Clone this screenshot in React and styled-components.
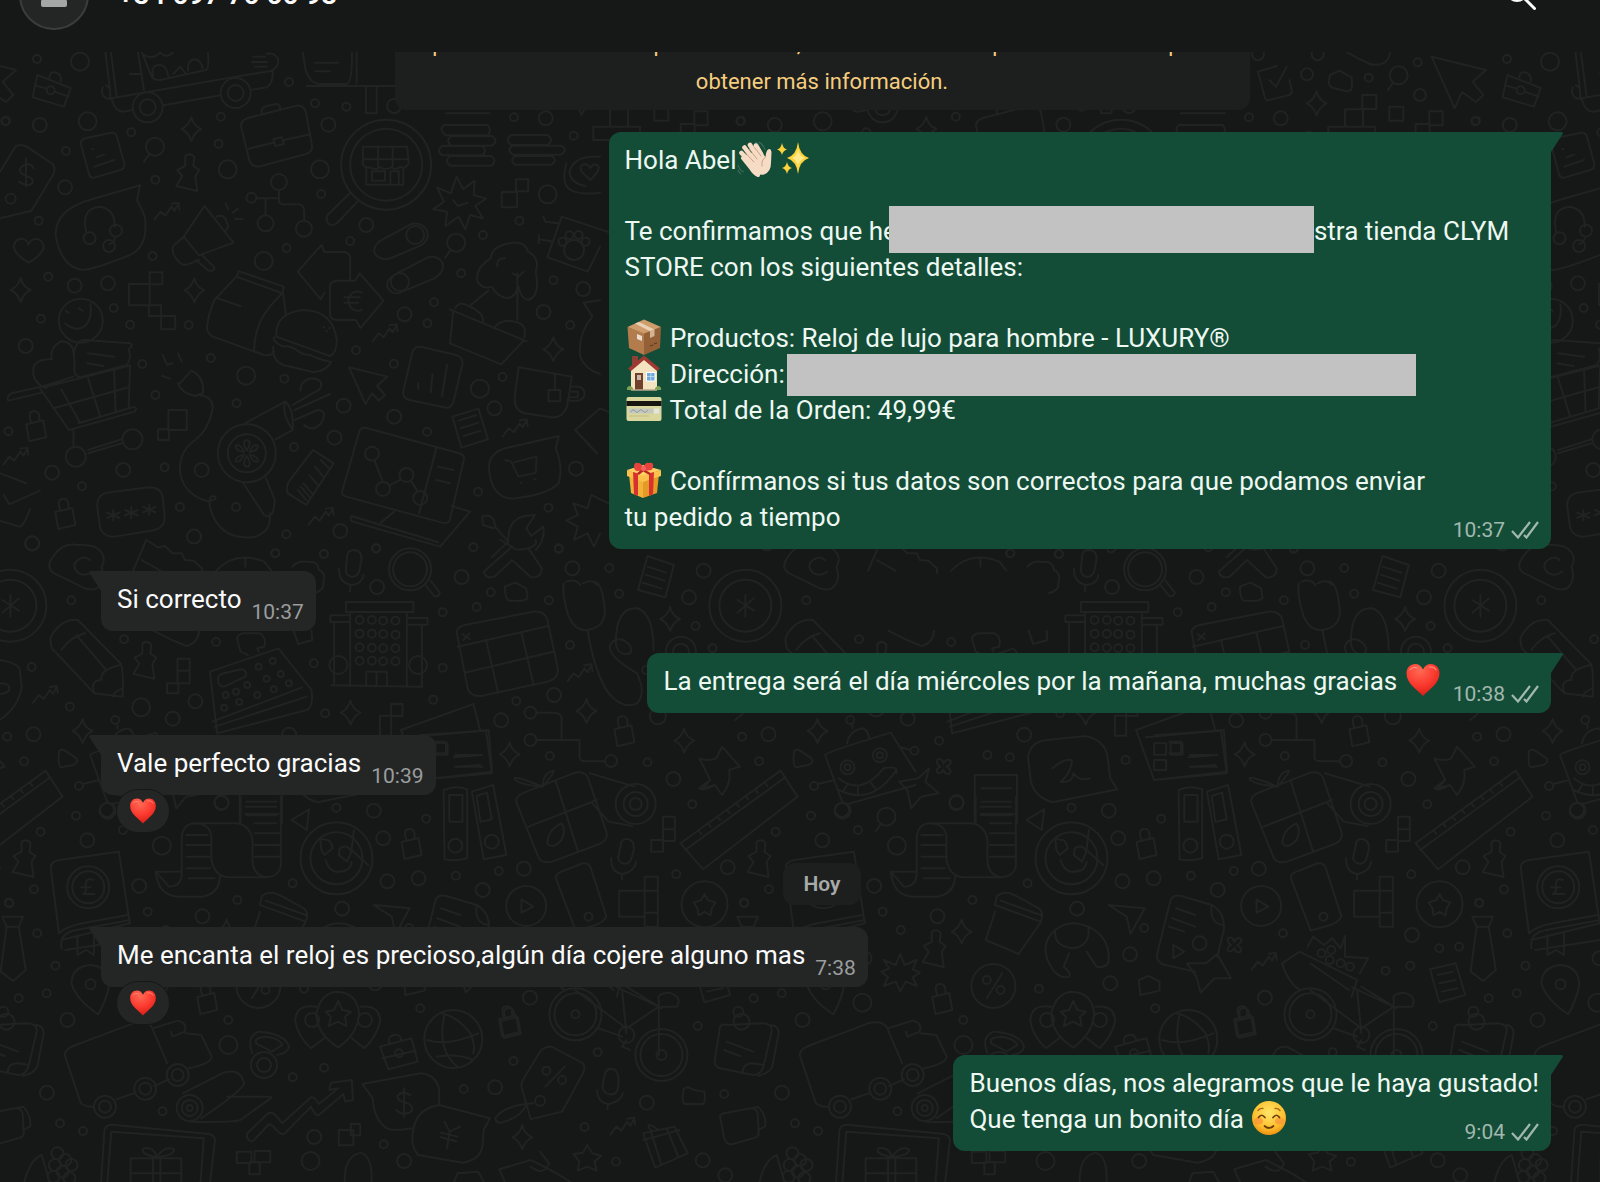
import React from 'react'
import styled, { createGlobalStyle } from 'styled-components'

const GlobalStyle = createGlobalStyle`
  * {
    box-sizing: border-box;
  }

  body {
    margin: 0;
    background: #161717;
    font-family: Roboto, "Liberation Sans", sans-serif;
    overflow: hidden;
  }

  p {
    margin: 0;
  }
`

/* ---------- wallpaper ---------- */

const TILE = 735

// small drawings used many times, centred on 0,0
const STAMPS = {
  sparkle: 'M0-12Q2-3 10 0Q3 3 0 12Q-3 3-10 0Q-3-3 0-12Z',
  lock: 'M-9-4L8-8L11 9L-6 13ZM-4-6Q-8-16-2-17Q5-18 4-8',
  pin: 'M-3-18Q2-22 6-17L5-8L11-4L7 2L9 17L-12 12L-6 2L-11-4L-3-8Z',
  zigzag: 'M-12 8L-6 0L-1 4L5-5L8-1L12-8M5-8L12-9L13-2',
  magnifier: 'M9-4A9 9 0 1 1-9-4A9 9 0 1 1 9-4M-6 4L-11 11',
  clover: 'M-6-7Q-1-9 0-3Q3-9 7-6Q8-2 3 0Q9 4 6 7Q1 8 0 3Q-3 8-6 6Q-8 2-3 0Q-8-3-6-7Z',
}

// every sheet has its own origin and scale; dots are [x, y, radius]
const SHEETS = [
  {
    x: 0, y: 100, sx: 0.3827, sy: 0.3333,
    dots: [
      [14, 64, 4], [343, 97, 4], [172, 153, 4], [406, 239, 4], [101, 362, 4], [399, 468, 4], [126, 530, 4], [297, 624, 4],
      [107, 656, 4], [340, 674, 4], [493, 675, 4], [372, 792, 4], [406, 885, 4], [22, 994, 4], [214, 1159, 4], [430, 1102, 4],
      [470, 1221, 4], [577, 50, 4], [571, 131, 4], [839, 282, 4], [749, 444, 4], [915, 423, 4], [1262, 405, 4], [1357, 362, 4],
      [1205, 520, 4], [1134, 607, 4], [1117, 670, 4], [930, 751, 4], [1029, 791, 4], [743, 836, 4], [551, 774, 4], [618, 910, 4],
      [768, 1041, 4], [1116, 995, 4], [1313, 831, 4], [1490, 675, 4], [1446, 541, 4], [1499, 107, 4], [1343, 52, 4], [905, 20, 4],
      [823, 10, 4], [1249, 1175, 4], [1433, 1223, 4], [1237, 1342, 4], [983, 1346, 4], [847, 1362, 4], [720, 1360, 4], [748, 1303, 4],
      [617, 1221, 4], [1460, 1347, 4], [104, 75, 7], [170, 262, 7], [195, 557, 7], [282, 550, 7], [67, 738, 7], [136, 1118, 7],
      [322, 1110, 7], [84, 1331, 7], [527, 1110, 7], [507, 1310, 7], [858, 74, 7], [957, 375, 7], [1057, 643, 7], [898, 917, 7],
      [1030, 950, 7], [874, 1013, 7], [1292, 925, 7], [1505, 1106, 7], [1420, 636, 7], [1524, 567, 7], [1426, 55, 7], [889, 1293, 7],
      [1030, 18, 7], [229, 64, 9], [595, 208, 9], [836, 208, 9], [689, 483, 9], [643, 827, 9], [1254, 866, 9], [1431, 283, 9],
      [1009, 194, 45], [1009, 194, 36], [234, 415, 6], [303, 392, 6], [285, 438, 6], [729, 246, 8], [657, 293, 5], [694, 370, 8],
      [794, 386, 8], [1085, 405, 9], [1045, 546, 9], [1500, 450, 10], [1470, 425, 4], [1488, 406, 4], [1512, 405, 4], [1530, 425, 4],
      [211, 662, 22], [198, 1070, 10], [346, 1018, 10], [645, 1060, 29], [645, 1060, 19], [972, 1061, 7], [1001, 1167, 7], [1062, 1125, 7],
      [1098, 1194, 7], [28, 296, 5],
    ],
    stamps: [
      ['sparkle', 500, 87], ['sparkle', 54, 570], ['sparkle', 508, 571], ['sparkle', 1446, 748], ['magnifier', 405, 152], ['magnifier', 1192, 440],
      ['pin', 492, 222], ['zigzag', 435, 335], ['zigzag', 1005, 700], ['zigzag', 1345, 985], ['zigzag', 838, 1250], ['zigzag', 40, 1070],
      ['lock', 92, 985], ['lock', 168, 1248],
    ],
    lines: [
      'M0 215L40 140Q52 130 70 140L135 190Q147 200 140 222L82 332L0 355M88 205Q80 188 64 195Q48 203 54 218Q60 226 74 230Q90 238 84 250Q70 262 50 245M68 175V260',
      'M212 135Q208 120 222 115L290 98Q302 97 305 108L325 192Q326 206 314 210L246 233Q236 235 233 224ZM252 172L272 164M247 200L298 180M240 148h4',
      'M650 53Q628 60 630 80L650 175Q656 204 680 199L800 162Q818 155 815 135L800 40Q795 15 775 17ZM650 146L714 128M742 120L806 104M684 40Q680 20 700 17L722 12Q732 12 732 26M714 118L736 112L742 132L720 138Z',
      'M914 280L856 345Q848 365 864 375Q874 378 884 366L936 302',
      'M948 140H1064L1068 190Q1058 210 1046 200Q1034 212 1022 202Q1008 212 994 202Q980 212 968 202Q950 205 948 190ZM948 178H1066M988 140V200M1026 140V200M957 206V254H1054V206M972 214h34v28h-34zM1020 254V214H1042V254',
      'M1165 40H1280M1160 75H1275Q1285 90 1275 106H1165Q1145 90 1160 75ZM1180 108H1285Q1305 122 1285 137H1180Q1162 122 1180 108ZM1156 138H1260Q1275 152 1260 166H1156Q1138 152 1156 138ZM1176 168H1284Q1300 182 1284 197H1176Q1160 182 1176 168ZM1336 105H1430Q1450 120 1430 135H1336Q1318 120 1336 105ZM1340 137H1466Q1486 150 1466 164H1340Q1322 150 1340 137ZM1346 168H1440Q1460 181 1440 194H1346Q1330 181 1346 168Z',
      'M1568 170Q1500 165 1488 215Q1490 250 1530 258M1480 190Q1462 260 1500 275Q1530 285 1568 278M1542 240L1520 215Q1512 195 1528 192Q1540 195 1542 205Q1550 188 1562 196Q1572 208 1542 240',
      'M366 256L240 298Q140 330 146 410Q160 500 215 510Q240 510 340 465Q390 435 378 350Q372 330 358 300ZM226 400Q210 325 260 320Q300 325 300 380M300 415Q296 430 286 432',
      'M75 488Q36 462 36 438Q40 415 58 416Q72 420 74 434Q80 416 96 416Q114 422 114 442Q110 465 75 488Z',
      'M534 318L610 428L520 466L480 410ZM480 410L455 435Q445 450 460 475Q475 500 490 493L520 480M512 480L545 512Q560 515 560 502L528 466M566 350Q585 340 592 365Q600 385 590 392M590 310L596 328M608 338L622 326M614 356L634 358',
      'M670 295H730M729 270V305Q732 315 745 313H780Q795 315 795 335V362M694 295V346',
      'M990 425Q965 455 990 472Q1005 482 1022 474L1100 436Q1125 418 1115 390Q1100 365 1075 372ZM1030 525Q1005 545 1014 565Q1025 585 1045 578L1135 535Q1165 515 1155 485Q1140 465 1118 472Z',
      'M1193 230L1210 268L1240 242L1238 285L1270 296L1242 318L1262 355L1228 345L1216 388L1198 350L1164 378L1168 335L1132 328L1160 305L1142 262L1178 280ZM1184 300L1196 318L1222 308',
      'M1348 238h32v36h-32zM1311 276h40v46h-40zM337 552h54v64h-54zM391 517h33v36h-33zM389 616h32v32h-32zM421 648h37v40h-37zM440 930h48v60h-48zM413 988h28v32h-28z',
      'M1600 400L1468 350L1430 472L1536 515L1568 440M1420 350L1425 365L1458 370M1408 405V430M1408 418L1440 424',
      'M1330 430Q1370 420 1380 455Q1412 475 1400 515Q1412 590 1380 600Q1360 595 1355 560M1330 430Q1285 440 1282 475Q1240 505 1248 545Q1262 570 1285 560Q1300 590 1325 595Q1350 590 1352 560M1300 500Q1295 475 1320 475M1340 520L1355 530L1368 515M1352 520V660M1276 572L1230 615',
      'M1175 628L1376 724M1184 636L1176 730L1310 793L1368 722M1190 625Q1195 605 1220 615Q1240 625 1255 640Q1265 655 1262 668M1290 685Q1310 655 1345 665Q1378 670 1370 712',
      'M840 435L778 515L838 598L848 578M840 435L848 456H900Q915 460 915 475V540M862 560Q862 545 880 542H928L940 520L1002 602L942 684L930 660H880Q862 660 862 640ZM946 578Q920 565 910 600Q915 640 945 630M900 592H940M900 608H936',
      'M618 530L624 514L742 560L738 580ZM618 530L560 600Q545 640 541 680Q540 700 556 710L690 765Q712 768 716 755M738 580Q700 620 680 665Q664 710 664 752M740 580L747 645M568 595L628 618',
      'M722 705Q720 640 790 630Q870 630 880 720Q880 760 862 768L722 710ZM716 712Q712 725 740 740Q755 735 775 750Q790 765 810 765Q830 778 862 785M714 740Q710 780 740 795L820 817Q850 815 866 785M845 682h2M852 694h2M860 684h2',
      'M236 612Q242 650 225 675Q200 700 170 670M180 640L172 632M206 625L216 632',
      'M120 865Q80 845 88 800Q98 775 135 778Q130 740 160 724Q190 725 192 760M192 830L115 858L30 880Q15 890 22 902L110 878M105 866L180 990L352 935Q362 920 346 922L205 970M115 862L340 797L336 925M160 868L208 965M230 835L262 950M298 810L302 935M140 925L336 862M192 990V1036M230 1050L318 1018M230 1060L318 1030',
      'M200 735Q190 750 195 790Q190 830 210 832L332 795Q345 770 336 748Q350 735 340 730L220 720Q205 722 200 735ZM230 760L298 770M228 790L270 798',
      'M470 850L500 812Q535 830 530 880L510 888Q475 880 465 850M520 885Q560 890 555 930Q545 990 510 1020Q470 1050 470 1110Q475 1180 540 1203Q570 1200 562 1190Q545 1180 548 1220Q570 1320 660 1312Q710 1300 705 1240M425 765L436 795L450 790M465 760L475 785M424 828L444 836',
      'M640 970L745 905Q768 925 765 990L720 1018M745 905Q735 940 765 990M636 1150L690 1245Q715 1265 718 1200L695 1135M765 915L835 868Q850 840 815 835Q785 840 785 872M770 930L862 882M770 960L830 930Q855 930 842 965Q820 1000 795 975',
      'M645 1052Q630 1022 645 1020Q660 1022 645 1052M645 1068Q630 1098 645 1100Q660 1098 645 1068M638 1056Q614 1052 616 1036Q628 1030 638 1056M652 1056Q676 1052 674 1036Q662 1030 652 1056M638 1064Q614 1070 616 1084Q628 1090 638 1064M652 1064Q676 1070 674 1084Q662 1090 652 1064',
      'M818 1050L872 1090L800 1215L752 1180Q745 1160 758 1140ZM778 1170L800 1200M786 1160L808 1190M793 1150L815 1180M808 1125L830 1155M823 1100L845 1130M838 1080L860 1105',
      'M912 802L1012 830L985 858L1006 885L990 902L972 880L955 912Z',
      'M1078 755Q1085 735 1105 742L1192 765Q1212 772 1208 795L1185 905Q1180 928 1160 922L1070 900Q1050 895 1054 872ZM1093 850V866M1130 822L1126 876M1168 795L1155 888',
      'M1355 802L1494 830L1482 920Q1470 955 1440 952L1370 940Q1342 930 1345 890ZM1450 822V868M1433 870H1464V904H1433ZM1494 860Q1530 855 1527 885Q1522 910 1482 900M1494 875H1510V892H1488',
      'M1182 950L1250 926L1275 1018L1206 1043ZM1198 962L1244 946M1204 985L1250 968M1212 1008L1256 992',
      'M940 990Q945 980 960 985L1200 1060Q1215 1065 1212 1080L1175 1262Q1170 1272 1155 1268L905 1190Q890 1185 895 1170ZM1140 1045L1095 1240M1030 1235L995 1268M918 1248L1145 1327M918 1248Q912 1262 925 1266L1150 1340L1228 1235L1180 1218M1145 1100L1185 1110M1140 1140L1175 1150M978 1080L1000 1145M1020 1155L1048 1138M1075 1145L1092 1175',
      'M1460 1008L1320 1045Q1275 1060 1278 1110Q1285 1195 1340 1196Q1430 1185 1460 1150Q1472 1100 1452 1045ZM1320 1080L1335 1085L1355 1130L1400 1118L1402 1070L1340 1088M1360 1148h3M1396 1138h3',
      'M1600 940L1568 925L1503 990L1560 1060M1568 600L1525 608L1548 650Q1510 700 1516 770Q1530 810 1568 822M1590 1210L1545 1185L1535 1225L1498 1210L1510 1245L1480 1262L1510 1280L1500 1320L1535 1300L1552 1340L1568 1300',
      'M280 1178L390 1162Q420 1162 425 1190L430 1250Q432 1280 405 1290L300 1310Q270 1312 262 1285L254 1220Q252 1185 280 1178ZM296 1230V1262M280 1238L312 1254M280 1254L312 1238M343 1222V1254M327 1230L359 1246M327 1246L359 1230M390 1213V1245M374 1221L406 1237M374 1237L406 1221',
      'M1260 1250Q1280 1240 1290 1260L1295 1282L1328 1325L1285 1372M1260 1250L1262 1275L1290 1285M1328 1330Q1325 1260 1370 1248L1398 1245L1375 1285L1388 1308L1420 1280Q1425 1320 1400 1350',
      'M0 1120L68 1150M10 1185L24 1213L104 1172M0 1262L50 1280Q62 1280 78 1228',
    ],
  },
  {
    x: 0, y: 0, sx: 0.3333, sy: 0.3333,
    dots: [[111, 177, 4], [867, 246, 4], [240, 185, 9], [152, 271, 4], [443, 322, 15], [443, 322, 8], [707, 279, 15], [707, 279, 8]],
    stamps: [],
    lines: [
      'M112 225L212 264L192 320L98 292ZM104 256L140 266M164 275L206 290M148 232Q150 212 168 218Q186 224 182 245',
      'M312 120L330 270M328 120L350 290M408 120L432 270M308 262Q300 290 325 296L815 212Q838 200 834 175Q820 156 800 162M318 256Q334 262 330 290M335 296Q345 335 370 335L396 330M490 316L662 286M752 270L800 262Q820 250 818 215M425 156L455 230Q460 240 480 240L618 210Q630 205 622 140M430 165Q460 180 480 158Q500 178 520 156M460 230Q450 195 480 195Q500 195 505 230M520 222L540 200L555 218M565 212Q560 180 585 178Q605 182 608 205M390 222H420M760 170H795M755 186H800M765 200H800',
      'M905 130L915 200Q925 250 960 252H1040Q1060 245 1055 130M1070 130V250M920 258H1184M1098 258V340H1130V258M945 188H1015M945 214H990',
    ],
  },
  {
    x: 415, y: 0, sx: 0.3333, sy: 0.3333,
    dots: [[324, 163, 6], [503, 163, 6], [471, 223, 6], [656, 233, 4], [803, 187, 4], [810, 285, 6], [978, 362, 4]],
    stamps: [['sparkle', 500, 310], ['magnifier', 746, 238]],
    lines: [
      'M380 198L324 215L345 295Q348 302 358 300L415 286Q428 282 425 270L418 240M358 240L378 260L410 200',
      'M540 225L568 212L605 232L606 262Q604 274 590 274L550 264Q536 258 536 245ZM580 150Q620 175 660 192Q715 205 722 150',
      'M585 328h54v52h-54zM637 285h42v42h-42zM718 320h42v42h-42zM838 334h40v42h-40zM797 372h42v42h-42zM535 380h140v40h-140z',
      'M845 170L1008 210L968 245L1000 285L978 306L936 276L914 325Z',
    ],
  },
  {
    x: 0, y: 540, sx: 0.4719, sy: 0.3333,
    dots: [
      [151, 181, 4], [263, 298, 4], [458, 306, 4], [67, 381, 4], [148, 500, 4], [583, 40, 4], [686, 42, 4], [797, 25, 4],
      [1040, 157, 4], [1010, 201, 4], [938, 217, 4], [938, 383, 4], [1163, 181, 4], [1184, 25, 4], [1291, 84, 4], [1312, 161, 4],
      [1208, 315, 4], [1474, 258, 4], [1369, 390, 4], [918, 479, 4], [665, 370, 4], [689, 520, 4], [1094, 483, 4], [15, 590, 4],
      [51, 664, 4], [161, 827, 4], [86, 875, 4], [72, 1048, 4], [19, 1088, 4], [79, 1180, 4], [313, 1115, 4], [503, 1080, 4],
      [713, 803, 4], [903, 836, 4], [966, 1007, 4], [1057, 993, 4], [620, 1030, 4], [1165, 648, 4], [1372, 667, 4], [1467, 793, 4],
      [1433, 1003, 4], [1510, 325, 4], [414, 484, 7], [366, 536, 7], [71, 583, 7], [68, 10, 7], [799, 141, 7], [978, 111, 7],
      [1213, 85, 7], [1460, 172, 7], [1491, 92, 7], [1174, 465, 7], [1062, 541, 7], [1427, 717, 7], [1394, 529, 8], [469, 789, 7],
      [792, 812, 7], [812, 895, 7], [821, 1024, 7], [887, 1015, 7], [1110, 986, 7], [1023, 1050, 7], [185, 901, 7], [725, 1106, 7],
      [295, 1038, 7], [429, 1129, 7], [1542, 982, 7], [299, 502, 9], [343, 917, 9], [228, 812, 8], [22, 197, 36], [22, 197, 26],
      [548, 380, 3], [578, 363, 3], [500, 455, 3], [524, 435, 3], [565, 416, 3], [595, 402, 3], [478, 465, 3], [475, 503, 3],
      [507, 486, 3], [545, 465, 3], [580, 448, 3], [612, 430, 3], [717, 375, 9], [886, 375, 9],
      [762, 240, 4], [788, 240, 4], [812, 242, 4], [838, 242, 4], [762, 281, 4], [788, 281, 4], [812, 282, 4], [838, 284, 4],
      [762, 322, 4], [788, 323, 4], [812, 325, 4], [838, 325, 4], [762, 362, 4], [788, 362, 4], [812, 364, 4], [838, 364, 4],
      [869, 88, 21], [869, 88, 17], [1443, 335, 15], [1443, 335, 8], [1124, 518, 6], [1124, 600, 6], [1295, 663, 6], [965, 917, 7],
      [1042, 905, 7], [1347, 792, 20], [1347, 792, 12], [1347, 792, 6], [713, 955, 36], [713, 955, 26], [187, 1042, 21], [187, 1042, 16],
      [1115, 1098, 20], [1493, 1093, 23], [1247, 1130, 4],
    ],
    stamps: [
      ['sparkle', 743, 518], ['sparkle', 1243, 513], ['sparkle', 1420, 237], ['sparkle', 1450, 602], ['sparkle', 1080, 643], ['sparkle', 175, 573],
      ['pin', 308, 365], ['pin', 52, 960], ['zigzag', 95, 465], ['zigzag', 1228, 400], ['lock', 1321, 580], ['lock', 870, 918],
    ],
    lines: [
      'M22 165V230M5 180L40 212M40 175L5 218',
      'M108 60Q130 5 165 15Q175 12 200 20Q230 45 215 80Q225 125 205 145Q195 152 180 145L115 100Q98 85 108 60ZM190 60Q180 45 165 60Q150 75 165 98Q180 112 195 95',
      'M282 92L310 0L335 22L350 18L365 40L385 40L392 60L410 62L428 85V100M300 60L340 92M458 92Q500 30 560 65L575 92M620 80Q630 60 655 66Q672 62 676 90Q692 100 685 130Q688 150 665 160M520 55V80M325 272Q360 300 395 318Q420 310 422 272M622 272L632 312L662 300L660 272',
      'M108 290Q130 235 165 240L255 370Q262 380 260 470L200 460L110 325Q105 300 108 290ZM130 330Q150 290 180 280M165 290L225 390M200 460Q190 420 215 420Q210 390 255 375M240 470Q240 455 260 445',
      'M376 356h26v36h-26zM376 392h26v38h-26zM354 430h24v30h-24zM805 527h24v60h-24zM829 492h24v36h-24zM1405 830h25v38h-25zM1405 868h25v35h-25zM1380 900h25v35h-25zM1366 1052H1312V1130H1366M1366 1010h28v150h-28zM1366 1052H1394M1366 1118H1394',
      'M503 300Q500 285 515 280L550 280Q565 290 560 320L545 325L548 335M503 300L510 335L525 345M445 395L590 325L660 450Q665 500 650 510L460 580ZM450 545L640 442M455 560L650 470M462 420Q460 405 475 400L510 388Q525 390 520 410L475 440Q462 440 462 420Z',
      'M733 186H876V216H733ZM700 226H742V246H700ZM862 234H906V254H862ZM742 216V436M862 216V436M702 436L895 440M708 246V430M894 254V436M776 436V395H820V436M798 395V436',
      'M735 55Q735 30 750 30Q768 32 766 60L762 90Q758 112 745 110Q732 108 733 85ZM718 85Q718 130 745 135Q768 132 770 105M742 135V155M900 132L920 168Q930 172 932 158L912 122',
      'M1048 110Q1030 118 1025 95L1085 20Q1090 35 1120 25L1148 85Q1148 115 1125 112L1085 60ZM1060 0L1085 20M1120 25Q1140 15 1135 0M1070 140L1092 128L1115 145L1118 175Q1110 185 1095 182L1078 182Q1070 175 1070 140Z',
      'M968 280Q965 262 985 255L1130 215Q1155 212 1160 240L1182 385Q1185 415 1160 425L1020 468Q1000 470 992 450ZM970 320L1162 258M985 398L1172 335M1030 300L1055 455M1105 278L1130 430M980 282L995 298M995 280L982 300',
      'M1195 130Q1190 160 1205 230Q1220 275 1245 270Q1290 260 1280 190Q1275 130 1260 125M1200 125Q1220 115 1230 135M1235 130Q1255 115 1265 135M1245 270Q1260 400 1290 460Q1320 510 1350 490Q1370 460 1350 400Q1290 350 1292 320Q1300 290 1320 300Q1345 320 1335 340Q1310 350 1305 310Q1305 200 1350 205Q1385 220 1385 330',
      'M1372 48L1428 75L1410 172L1352 150ZM1372 80L1412 98M1368 104L1408 122M1362 128L1402 146',
      'M0 360Q40 370 42 390L46 440Q40 500 0 540M0 430Q20 430 20 445Q20 460 0 462',
      'M1138 518H1175Q1190 520 1190 535V600M1138 600H1228V655Q1230 665 1245 664H1282',
      'M1530 620L1568 680L1545 690Q1550 730 1530 765L1515 735L1490 745L1505 720L1482 655Q1500 665 1518 655ZM1505 720L1482 745Q1490 755 1515 735',
      'M850 570L1003 492L1018 572M890 585L1030 572L1042 700L905 718M962 652L1022 645M968 680L1018 675M920 605H945V640H920',
      'M940 750Q965 735 990 748V955Q965 965 942 958ZM952 765H980V845H952ZM1000 755L1045 735L1073 945L1025 958ZM1010 768L1032 758L1042 838L1018 846Z',
      'M1095 790Q1090 770 1110 758L1215 700Q1235 690 1245 710L1285 875Q1290 900 1270 912L1170 965Q1150 972 1142 955ZM1120 860L1265 780M1178 725L1225 935M1150 740Q1080 700 1092 720Q1105 735 1150 740Q1180 690 1172 692Q1150 700 1150 740M1250 700L1345 740M1255 790L1290 845L1340 858M1190 850Q1200 870 1190 900Q1170 930 1160 910Q1160 870 1190 850Z',
      'M1315 920Q1315 895 1330 897Q1345 900 1343 930L1337 960Q1330 975 1318 970Q1308 960 1310 950ZM1295 955Q1295 1000 1320 1002Q1345 995 1348 965M1318 1002V1018',
      'M1442 910L1654 692L1690 770L1490 988ZM1452 930L1664 712M1480 872L1486 882M1500 850L1506 860M1520 830L1526 840M1540 810L1546 820M1560 790L1566 800M1580 768L1586 778M1600 748L1606 758M1620 728L1626 738',
      'M125 635Q128 625 138 632L162 655Q168 668 155 675L130 682Q122 680 125 635ZM655 808L618 840L650 870Z',
      'M510 770V850M595 770V980Q590 1010 565 1012Q535 1005 535 960V900Q530 855 500 850H410Q445 850 448 890V960Q455 1010 485 1012H570M410 850Q385 855 385 900V1000Q385 1040 358 1040L330 995H385M330 995Q335 1070 380 1070H430Q465 1060 466 1010M520 800H585M520 822H590M540 850H585M540 880H592M540 915H592M540 950H592M395 885H440M395 915H445M395 950H445M395 985H445M400 1015H455',
      'M680 910Q675 890 690 900Q700 895 705 925L688 945Q678 930 680 910M720 925Q735 910 745 935L735 965L718 945ZM690 960Q700 1010 735 990Q745 980 745 965M750 870L745 930L780 975',
      'M108 990Q105 965 125 960L252 935L275 1150L130 1200M108 990L125 1180Q140 1160 175 1150L270 1125M197 1020Q180 1010 182 1040Q185 1055 176 1062H200M172 1042H192',
      'M1105 1078L1130 1100L1105 1118ZM1178 1015Q1178 1000 1190 995L1235 970Q1248 968 1252 985L1285 1130Q1280 1145 1262 1155L1220 1172ZM1493 1062L1500 1080L1516 1088L1508 1105L1506 1126L1493 1116L1480 1126L1478 1105L1470 1088L1486 1080Z',
    ],
  },
  {
    x: 5, y: 700, sx: 0.5485, sy: 0.3333,
    dots: [
      [196, 202, 7], [196, 202, 3], [255, 166, 7], [255, 166, 3], [186, 330, 7], [135, 258, 4], [318, 152, 4], [201, 60, 4],
      [451, 165, 4], [492, 172, 4], [703, 180, 4], [363, 122, 4], [518, 104, 7], [395, 307, 7], [215, 390, 4], [293, 690, 4],
      [737, 684, 4], [711, 763, 7], [675, 850, 7], [545, 866, 4], [227, 775, 7], [223, 908, 9], [114, 960, 7], [25, 895, 4],
      [76, 880, 4], [407, 960, 4], [757, 925, 4], [957, 893, 7], [990, 700, 4], [1177, 812, 4], [1222, 797, 4], [1263, 978, 4],
      [1225, 705, 7], [1275, 745, 4], [1311, 740, 4], [1348, 610, 4], [92, 797, 4], [838, 730, 7], [462, 858, 22], [450, 840, 4],
      [475, 870, 4], [1060, 760, 4], [1075, 780, 4], [1095, 790, 4], [1112, 800, 4], [1078, 750, 4], [156, 853, 5],
      [1040, 943, 26], [1040, 943, 21], [1040, 943, 4],
    ],
    stamps: [
      ['magnifier', 267, 362], ['clover', 371, 200], ['clover', 901, 735], ['lock', 367, 903], ['lock', 917, 970], ['pin', 355, 750],
      ['sparkle', 404, 695], ['zigzag', 955, 785],
    ],
    lines: [
      'M320 215L275 98Q160 155 155 165L185 300Q190 318 205 308L320 255M195 130Q200 90 225 85Q235 95 235 115M205 75V85M290 140L310 150M142 252L172 240M180 270Q240 320 285 210M180 235Q220 290 262 205M262 205Q290 195 285 220M195 255L188 275M215 262L215 285M238 248L248 268',
      'M345 205L338 245L362 280L330 290L312 325L305 270L290 245L325 235Z',
      'M525 170Q530 125 560 120L630 108Q665 120 670 170L675 235L688 268L570 307Q535 290 530 240ZM570 205Q590 175 605 180Q605 215 585 245Q605 250 608 220Q620 245 638 235',
      'M428 370V225H505V370M440 265H495M440 305H495M440 346H495',
      'M755 130h22v34h-22zM785 130h22v34h-22zM755 180h22v30h-22zM722 90L755 240L888 215L882 90L740 112M820 165H870M820 200H870',
      'M468 590Q480 570 500 585L545 625Q555 640 548 665L465 615ZM475 602L548 645M465 635L448 720L508 762L548 668',
      'M672 615L738 625L712 702L705 650Z',
      'M760 765L785 600Q790 582 805 588L860 615Q885 640 882 690L870 770M760 765Q760 790 775 795L830 815M795 625L830 645M788 655L830 680M782 680L810 695M790 735L810 755L790 775ZM870 762L895 835L865 835L840 878L832 830L815 790L850 790ZM860 615Q855 670 882 675',
      'M575 690Q600 655 635 680Q675 710 672 785Q668 805 650 800L632 755M575 690Q545 730 565 795Q580 840 600 830Q605 820 590 800L600 760M575 690Q570 735 605 745Q640 740 635 680M478 820L450 895',
      'M292 762L300 795L322 780L315 808L328 818L315 832L322 858L302 845L292 875L284 845L262 858L270 832L258 815L272 805L262 780L284 795Z',
      'M727 840L745 828L765 845L765 872L730 885ZM1258 808L1305 790L1322 885L1275 907ZM1272 825L1300 815M1275 850L1305 840M1280 875L1308 865',
      'M1335 650H1373L1365 680L1378 810L1355 843L1332 815L1343 680ZM1343 680H1365',
      'M988 790L1020 755L1125 840L1115 890M1035 740L1045 710L1065 735L1080 715L1095 745L1103 708V770L1145 775L1130 820M1040 790L1110 870M988 790Q1000 850 1020 870',
      'M103 745Q98 700 130 690L228 660M110 750L228 720M132 705V765L148 750L162 765V700',
      'M156 795Q190 800 190 855Q185 900 170 943Q130 900 121 850Q122 800 156 795Z',
    ],
  },
  {
    x: 60, y: 900, sx: 0.523, sy: 0.3333,
    dots: [
      [322, 435, 9], [505, 503, 4], [445, 532, 4], [196, 634, 4], [44, 693, 4], [867, 483, 4], [1028, 457, 4], [772, 567, 4],
      [832, 562, 7], [1122, 608, 7], [1270, 582, 4], [-25, 578, 7], [1003, 681, 4], [486, 711, 7], [619, 733, 4], [479, 783, 9],
      [658, 783, 7], [1063, 785, 4], [1229, 781, 7], [1272, 826, 7], [0, 670, 4], [86, 620, 11], [86, 620, 6], [163, 566, 11],
      [163, 566, 6], [225, 525, 11], [225, 525, 6], [390, 495, 13], [390, 495, 7], [482, 360, 7], [583, 360, 7], [648, 460, 4],
      [752, 417, 29], [930, 512, 4], [960, 540, 4], [918, 602, 5], [1150, 465, 26], [1150, 465, 21], [1150, 465, 5], [1083, 405, 8],
      [1297, 335, 5], [1303, 365, 8], [248, 624, 13], [248, 624, 8], [248, 624, 3], [-5, 760, 6], [10, 780, 6], [-10, 795, 6],
      [22, 795, 6], [5, 815, 6], [-12, 830, 6], [18, 835, 6],
    ],
    stamps: [['lock', 860, 375], ['sparkle', 884, 712], ['zigzag', 1075, 680]],
    lines: [
      'M64 620Q50 622 40 610L10 470Q5 450 30 435L140 370Q165 360 175 380L205 490M108 598L145 578M180 558L208 538M178 385L225 362Q245 370 238 395L215 410L212 395M240 400L270 405L290 470Q290 490 246 505',
      'M368 460Q355 410 380 395Q430 400 438 440Q435 460 415 465M375 430Q370 412 395 410Q420 415 425 435L405 455Z',
      'M532 443Q490 400 490 340Q500 275 532 275Q568 280 572 340Q570 400 532 443ZM490 320Q450 310 450 365Q455 410 480 445L505 415M575 320Q612 315 612 365Q605 410 582 445L558 415M532 303L540 330L556 335L545 350L548 378L531 365L514 378L518 350L508 335L524 330Z',
      'M612 440L672 415L684 485L628 508ZM616 475L680 452M630 430Q625 410 638 405Q652 402 652 420',
      'M702 420Q740 440 800 400M730 340Q760 350 785 400Q795 440 790 460M735 345Q720 450 760 500M720 470Q760 460 790 480',
      'M940 440L1000 490Q1005 500 1000 520L960 635L900 658L884 570Q880 555 885 540L920 450Q930 438 940 440ZM965 500L928 560M905 610Q850 615 832 655Q835 675 850 665Q880 650 890 620',
      'M1042 520Q1048 500 1062 510Q1072 530 1066 570Q1060 590 1045 580Q1035 570 1038 550ZM1027 570Q1028 610 1050 612Q1072 605 1076 580M1047 612V628',
      'M985 270L1083 385L1145 320L1065 262M1075 275L1083 400M1145 300V465M1145 300Q1140 280 1165 278Q1190 290 1180 320H1150M1030 385L1075 410M1083 420L1075 440L1090 450M1083 260L1150 325',
      'M1262 380Q1265 370 1280 375L1340 370Q1365 370 1360 400L1345 500Q1340 525 1325 525L1262 505Q1250 500 1252 480ZM1360 375Q1378 380 1373 410L1362 500Q1355 520 1335 528M1275 425L1325 455M1270 450L1300 468M1305 520Q1305 490 1325 490L1345 495',
      'M1192 575Q1190 562 1202 562L1212 570L1232 575Q1235 600 1230 612L1195 612Q1188 608 1192 575Z',
      'M235 580L310 520Q345 500 352 550Q350 570 270 655M320 590H400Q410 590 400 598L345 660Q335 668 250 665',
      'M358 700L398 640Q405 635 412 645L425 670L480 592Q485 588 495 612L532 565L515 570L518 548L558 540L560 600L545 605L542 582L495 645Q488 650 480 620L430 700Q422 708 408 680L400 672L368 725Q355 720 358 700Z',
      'M725 615V570Q720 525 690 520L578 552L598 595Q600 660 625 685Q640 695 672 685M670 585Q650 570 645 590Q648 605 660 608Q678 615 672 635Q655 650 643 630M658 565V650',
      'M822 655L725 615Q690 625 680 665Q665 730 685 765L770 788Q805 780 808 735L810 690ZM735 665L745 695L765 680M745 695L740 745M728 698L760 710M728 712L758 724',
      'M533 690h28v46h-28zM556 672h18v34h-18zM338 755h28v34h-28zM372 753h30v34h-30zM362 787h20v36h-20z',
      'M1008 735L1018 760L1035 768L1022 785L1026 812L1008 800L990 812L993 785L982 762L1000 758Z',
      'M1115 700L1175 680L1200 760L1138 803ZM1130 695L1150 795M1160 685L1182 770M1115 720L1185 690M1130 690Q1120 675 1130 675L1145 690',
      'M1262 650Q1262 640 1275 638L1320 625Q1330 622 1334 640L1336 700Q1335 712 1325 715L1285 733Q1275 735 1270 715ZM1322 625L1335 620Q1352 650 1348 680L1335 690',
      'M78 860L85 690Q88 672 105 675L285 702Q298 708 296 725L286 860M90 860L98 695L275 715L268 860M135 860V775H232V860M135 820H232M178 775V860M192 775V860M185 772Q150 760 160 745Q180 740 185 772Q200 735 218 748Q220 765 185 772',
      'M545 860Q540 770 575 758Q600 770 595 860M750 860L760 820L800 815L815 860M855 860L840 808L900 780L950 820L990 860M900 800Q925 830 935 790L918 755M-70 860Q-60 780 -35 765L-20 846',
    ],
  },
]

const Sheet = ({ x, y, sx, sy, dots, stamps, lines }) => (
  <>
    {dots.map(([cx, cy, r], i) => (
      <circle key={i} cx={x + cx * sx} cy={y + cy * sy} r={r} />
    ))}
    {stamps.map(([name, px, py], i) => (
      <path key={i} d={STAMPS[name]} transform={`translate(${x + px * sx} ${y + py * sy})`} />
    ))}
    <g transform={`translate(${x} ${y}) scale(${sx} ${sy})`}>
      {lines.map((d, i) => <path key={i} d={d} />)}
    </g>
  </>
)

const Wallpaper = () => (
  <Doodles aria-hidden="true">
    <defs>
      <clipPath id="below-header"><rect x="-100" y="52" width="1000" height="1400" /></clipPath>
      <g id="doodles" clipPath="url(#below-header)">
        {SHEETS.map((sheet, i) => <Sheet key={i} {...sheet} />)}
      </g>
    </defs>
    {[-1, 0, 1, 2, 3].map((n) => (
      <use key={n} href="#doodles" x={n * TILE} y={-52} />
    ))}
  </Doodles>
)

/* ---------- emoji ---------- */

const HeartShape = () => (
  <>
    <defs>
      <radialGradient id="heart" cx="0.4" cy="0.2" r="0.9">
        <stop offset="0" stopColor="#ff6a55" />
        <stop offset="0.5" stopColor="#fb3b30" />
        <stop offset="1" stopColor="#d3160f" />
      </radialGradient>
    </defs>
    <path d="M18 34C13 28 1.500 22 1.500 11.500C1.500 5.500 5.500 2 10 2C13.800 2 16.500 4 18 7.500C19.500 4 22.200 2 26 2C30.500 2 34.500 5.500 34.500 11.500C34.500 22 23 28 18 34Z" fill="url(#heart)" />
    <path d="M5 8Q8 4 12 6M24 5Q29 4 31 8" stroke="#ff8c7c" strokeWidth="1.200" fill="none" strokeLinecap="round" />
  </>
)

const EMOJI = {
  heart: <HeartShape />,
  wave: (
    <>
      <path d="M14 22L4.500 12M16 18L7.500 6.500M20 15L13 4M24 13L19 4.500" stroke="#f7dcc5" strokeWidth="4.600" strokeLinecap="round" />
      <path d="M6 17L15 28Q20 35 27 33.500Q34 31 34 22L34.500 11Q34 7 31 8.500Q29 10 28.500 16L23 9L9 14Z" fill="#f7dcc5" />
      <path d="M6 17L14 27Q17 32 21 34" stroke="#f7dcc5" strokeWidth="4" strokeLinecap="round" fill="none" />
      <path d="M9 12.500L17 21M12.500 8.500L20 18M18 7L24 15M28.500 16Q24 19 25 25" stroke="#c79a7d" strokeWidth="0.900" fill="none" strokeLinecap="round" />
      <path d="M22 1Q27 4 28 9M18.500 1Q21 2 22 4M1 24Q2 29 7 31M1 29Q2 32 4 33" stroke="#3c6a5b" strokeWidth="1.200" fill="none" />
    </>
  ),
  sparkles: (
    <g fill="#fdd33c">
      <path d="M22 1Q23.500 14 33 17Q23.500 20 22 33Q20.500 20 11 17Q20.500 14 22 1Z" />
      <path d="M6 2Q7 7.500 11 8.500Q7 9.500 6 14Q5 9.500 1 8.500Q5 7.500 6 2Z" />
      <path d="M11 21Q12 26 16 27Q12 28 11 33Q10 28 6 27Q10 26 11 21Z" />
      <path d="M22 8Q23 15 29 17Q23 19 22 26Q21 19 16 17Q21 15 22 8Z" fill="#ffe98a" />
    </g>
  ),
  box: (
    <>
      <path d="M1.500 8L18 14V36L3 29Z" fill="#b27c4d" />
      <path d="M35 8L18 14V36L34 29Z" fill="#946038" />
      <path d="M1.500 8L18 0.500L35 8L18 14.500Z" fill="#cf9c6b" />
      <path d="M9 4.600L13 3L28.500 10.500L24 12.200Z" fill="#ead0b4" />
      <path d="M24 12.200L28.500 10.500V17L24 19Z" fill="#d3b391" />
      <path d="M11 15l5 2v5l-5-2z" fill="#e8ddd0" />
      <path d="M24 27l3-1M28 25l3-1" stroke="#5f3b1e" strokeWidth="1.200" />
    </>
  ),
  house: (
    <>
      <path d="M6 1h6v12H6z" fill="#8f3f34" />
      <path d="M5 14L18 3L31 14V35H5Z" fill="#f4e3c0" />
      <path d="M18 0.500L34 13.500L31 16L18 5L5 16L2 13.500Z" fill="#9e3a33" />
      <path d="M9 18h8v17H9z" fill="#70402c" />
      <path d="M11 20h4v5h-4z" fill="#c9b9ad" />
      <path d="M20 17h9.500v9.500H20z" fill="#fff" />
      <path d="M21 18h7.500v7.500H21z" fill="#6fa9dc" />
      <path d="M21 21.500h7.500M24.800 18v7.500" stroke="#c7e0f3" strokeWidth="0.800" />
      <path d="M1 33Q3 29 7 33V35H1ZM29 33Q33 29 35 33V35H29Z" fill="#7da453" />
      <path d="M5 35h26" stroke="#b9a890" strokeWidth="1.500" />
    </>
  ),
  card: (
    <>
      <rect x="0.500" y="6" width="35" height="24" rx="2" fill="#d9d79e" />
      <path d="M0.500 10h35v5h-35z" fill="#17150f" />
      <path d="M3 17.500h24v5H3z" fill="#c4c8bd" />
      <path d="M5 21Q7 17 9 20T13 20T17 20T22 19" stroke="#8c94a0" strokeWidth="0.900" fill="none" />
      <path d="M28 17.500h5v5h-5z" fill="#e4e5dd" />
      <path d="M3 25h20" stroke="#c5bd7b" strokeWidth="1" />
    </>
  ),
  gift: (
    <>
      <path d="M3 12L17 16V36L5 31Z" fill="#f3b33a" />
      <path d="M33 12L17 16V36L31 31Z" fill="#e59a26" />
      <path d="M1 8L18 13L35 8V14L17 20L1 14Z" fill="#fbc14b" />
      <path d="M1 8L17 3L35 8L17 14Z" fill="#ffcf62" />
      <path d="M7 10L12 11.500V34L8 32.300ZM28 10L23 11.500V34L27 32.300Z" fill="#d9322e" />
      <path d="M17 8Q8 11 8 5Q8 0 12 1Q16 1 17 6Q19 0 23 1Q28 0 27 5Q27 10 17 8Z" fill="#e8423d" />
      <path d="M17 8L12 12M17 8L24 12" stroke="#b92724" strokeWidth="2.500" />
      <circle cx="17.500" cy="6.500" r="2.500" fill="#f4625a" />
    </>
  ),
  smile: (
    <>
      <defs>
        <radialGradient id="face" cx="0.5" cy="0.35" r="0.65">
          <stop offset="0" stopColor="#ffe669" />
          <stop offset="0.7" stopColor="#fdbe2c" />
          <stop offset="1" stopColor="#ee9011" />
        </radialGradient>
      </defs>
      <circle cx="18" cy="18" r="17" fill="url(#face)" />
      <ellipse cx="7.500" cy="21" rx="4.500" ry="3.500" fill="#fb8a3c" opacity="0.600" />
      <ellipse cx="28.500" cy="21" rx="4.500" ry="3.500" fill="#fb8a3c" opacity="0.600" />
      <path d="M7.500 17.500Q10.500 13 14 17.500M22 17.500Q25.500 13 28.500 17.500M13.500 26Q18 30 22.500 26" stroke="#6b3d0b" strokeWidth="1.700" fill="none" strokeLinecap="round" />
      <path d="M7 10.500Q9 8 12 8.500M24 8.500Q27 8 29 10.500" stroke="#a8691b" strokeWidth="1.300" fill="none" strokeLinecap="round" />
    </>
  ),
}

const Emoji = ({ name, label }) => (
  <EmojiIcon viewBox="0 0 36 36" role="img" aria-label={label}>{EMOJI[name]}</EmojiIcon>
)

/* ---------- messages ---------- */

const Ticks = () => (
  <svg width="28" height="18" viewBox="0 0 28 18" fill="none" stroke="currentColor" strokeWidth="2.2" aria-hidden="true">
    <path d="M1 10L7 16.500L19 1M13 14L15.500 16.500L27 1" />
  </svg>
)

const Message = ({ out, stacked, time, reaction, children }) => (
  <Row $out={out} $reaction={reaction}>
    <Bubble $out={out} $stacked={stacked}>
      <Body>{children}</Body>
      <Meta $out={out} $stacked={stacked}>
        <time>{time}</time>
        {out && <Ticks />}
      </Meta>
      {reaction && (
        <Reaction type="button" aria-label="Reacción">
          <svg width="28" height="28" viewBox="0 0 36 36">{EMOJI.heart}</svg>
        </Reaction>
      )}
    </Bubble>
  </Row>
)

const App = () => {
  return (
    <>
      <GlobalStyle />
      <Page>
        <Header>
          <Avatar viewBox="0 0 70 70" aria-hidden="true">
            <circle cx="35" cy="35" r="34" fill="#242626" stroke="#3b3d3d" strokeWidth="2" />
            <circle cx="35" cy="26" r="7" fill="#a5a7a7" />
            <path d="M22 42Q22 36 35 36Q48 36 48 42V45Q48 47 46 47H24Q22 47 22 45Z" fill="#a5a7a7" />
          </Avatar>
          <Name>+34 697 76 66 93</Name>
          <SearchButton type="button" aria-label="Buscar">
            <svg width="30" height="30" viewBox="0 0 30 30" fill="none" stroke="currentColor" strokeWidth="3" strokeLinecap="round">
              <circle cx="11" cy="11" r="9.500" />
              <path d="M18 18L28.500 28.500" />
            </svg>
          </SearchButton>
        </Header>

        <Chat>
          <Wallpaper />
          <Notice>
            Los mensajes y las llamadas están cifrados de extremo a extremo. Solo las
            <br />
            personas en este chat pueden leerlos, escucharlos o compartirlos. Haz clic para
            <br />
            obtener más información.
          </Notice>

          <Message out stacked time="10:37">
            <p>Hola Abel<Emoji name="wave" label="👋🏻" /><Emoji name="sparkles" label="✨" /></p>
            <p>Te confirmamos que he<Redacted $width={425} $height={47} $overlap />stra tienda CLYM STORE con los siguientes detalles:</p>
            <p>
              <Emoji name="box" label="📦" /> Productos: Reloj de lujo para hombre - LUXURY®
              <br />
              <Emoji name="house" label="🏠" /> Dirección:<Redacted $width={629} $height={42} />
              <br />
              <Emoji name="card" label="💳" /> Total de la Orden: 49,99€
            </p>
            <p>
              <Emoji name="gift" label="🎁" /> Confírmanos si tus datos son correctos para que podamos enviar
              <br />
              tu pedido a tiempo
            </p>
          </Message>

          <Message time="10:37">Si correcto</Message>

          <Message out time="10:38">
            La entrega será el día miércoles por la mañana, muchas gracias <Emoji name="heart" label="❤️" />
          </Message>

          <Message time="10:39" reaction>Vale perfecto gracias</Message>

          <Day>Hoy</Day>

          <Message time="7:38" reaction>Me encanta el reloj es precioso,algún día cojere alguno mas</Message>

          <Message out stacked time="9:04">
            Buenos días, nos alegramos que le haya gustado!
            <br />
            Que tenga un bonito día <Emoji name="smile" label="☺️" />
          </Message>
        </Chat>
      </Page>
    </>
  )
}

export default App

const Page = styled.div`
  display: flex;
  flex-direction: column;
  height: 100vh;
  overflow: hidden;
`

// the bar is scrolled half way out of the window
const Header = styled.header`
  display: flex;
  align-items: center;
  flex-shrink: 0;
  height: 114px;
  margin-top: -62px;
  padding: 0 64px 0 19px;
  background: #161717;
  color: #fafafa;
`

const Avatar = styled.svg`
  width: 70px;
  height: 70px;
`

const Name = styled.h1`
  flex: 1;
  margin: 0 0 0 29px;
  font-size: 28px;
  line-height: 36px;
  font-weight: 600;
`

const SearchButton = styled.button`
  display: flex;
  padding: 0;
  border: none;
  background: none;
  color: inherit;
  cursor: pointer;
`

const Chat = styled.main`
  position: relative;
  flex: 1;
  min-height: 0;
  display: flex;
  flex-direction: column;
  justify-content: flex-end;
  gap: 22px;
  padding: 0 49px 31px 93px;
  overflow: hidden;
`

const Doodles = styled.svg`
  position: absolute;
  top: 0;
  left: 0;
  width: 100%;
  height: 100%;
  fill: none;
  stroke: #212323;
  stroke-width: 2;
  stroke-linejoin: round;
  stroke-linecap: round;

  path {
    vector-effect: non-scaling-stroke;
  }
`

const Notice = styled.p`
  position: relative;
  align-self: center;
  flex-shrink: 0;
  width: 100%;
  max-width: 855px;
  padding: 9px 12px;
  border-radius: 12px;
  background: #1d1f1f;
  color: #f5cd7e;
  font-size: 22px;
  line-height: 38px;
  text-align: center;
`

const Row = styled.div`
  position: relative;
  display: flex;
  flex-shrink: 0;
  justify-content: ${({ $out }) => ($out ? 'flex-end' : 'flex-start')};
  padding-left: 8px;
  margin-bottom: ${({ $reaction }) => ($reaction ? '46px' : '0')};
`

const Bubble = styled.article`
  position: relative;
  display: flex;
  flex-direction: ${({ $stacked }) => ($stacked ? 'column' : 'row')};
  max-width: 65%;
  padding: 10px 12px 14px 16px;
  border-radius: ${({ $out }) => ($out ? '12px 0 12px 12px' : '0 12px 12px 12px')};
  background: ${({ $out }) => ($out ? '#144d37' : '#242626')};
  color: ${({ $out }) => ($out ? '#eef8f2' : '#fafafa')};

  &::before {
    content: "";
    position: absolute;
    top: 0;
    ${({ $out }) => ($out ? 'right: -12px' : 'left: -12px')};
    width: 12px;
    height: 20px;
    background: inherit;
    clip-path: ${({ $out }) => ($out
      ? 'polygon(0 0, 92% 0, 100% 8%, 0 100%)'
      : 'polygon(8% 0, 100% 0, 100% 100%, 0 8%)')};
  }
`

const Body = styled.div`
  font-size: 26px;
  line-height: 36px;

  p + p {
    margin-top: 35px;
  }
`

const Meta = styled.div`
  display: flex;
  align-items: center;
  align-self: flex-end;
  gap: 6px;
  margin: ${({ $stacked }) => ($stacked ? '-17px 0 -7px' : '0 0 -7px 10px')};
  font-size: 21px;
  line-height: 24px;
  color: ${({ $out }) => ($out ? '#a1b8af' : '#9b9d9d')};
`

// the negative margins keep tall inline boxes from stretching the line
const EmojiIcon = styled.svg`
  display: inline-block;
  width: 36px;
  height: 36px;
  margin: -6px 2px -6px 1px;
  vertical-align: -2px;
`

const Redacted = styled.span`
  position: relative;
  display: inline-block;
  width: ${({ $width }) => $width}px;
  height: ${({ $height }) => $height}px;
  margin: -12px 0 -12px ${({ $overlap }) => ($overlap ? '-8px' : '2px')};
  vertical-align: -1px;
  background: #c2c2c2;
`

const Reaction = styled.button`
  position: absolute;
  left: 15px;
  top: calc(100% - 6px);
  display: flex;
  align-items: center;
  justify-content: center;
  width: 54px;
  height: 44px;
  padding: 0;
  border: 1px solid #161717;
  border-radius: 22px;
  background: #242626;
  cursor: pointer;
`

const Day = styled.div`
  position: relative;
  align-self: center;
  flex-shrink: 0;
  padding: 3px 20px;
  border-radius: 12px;
  background: #1d1f1f;
  color: #a8aaaa;
  font-size: 21px;
  line-height: 36px;
  font-weight: 600;
`
